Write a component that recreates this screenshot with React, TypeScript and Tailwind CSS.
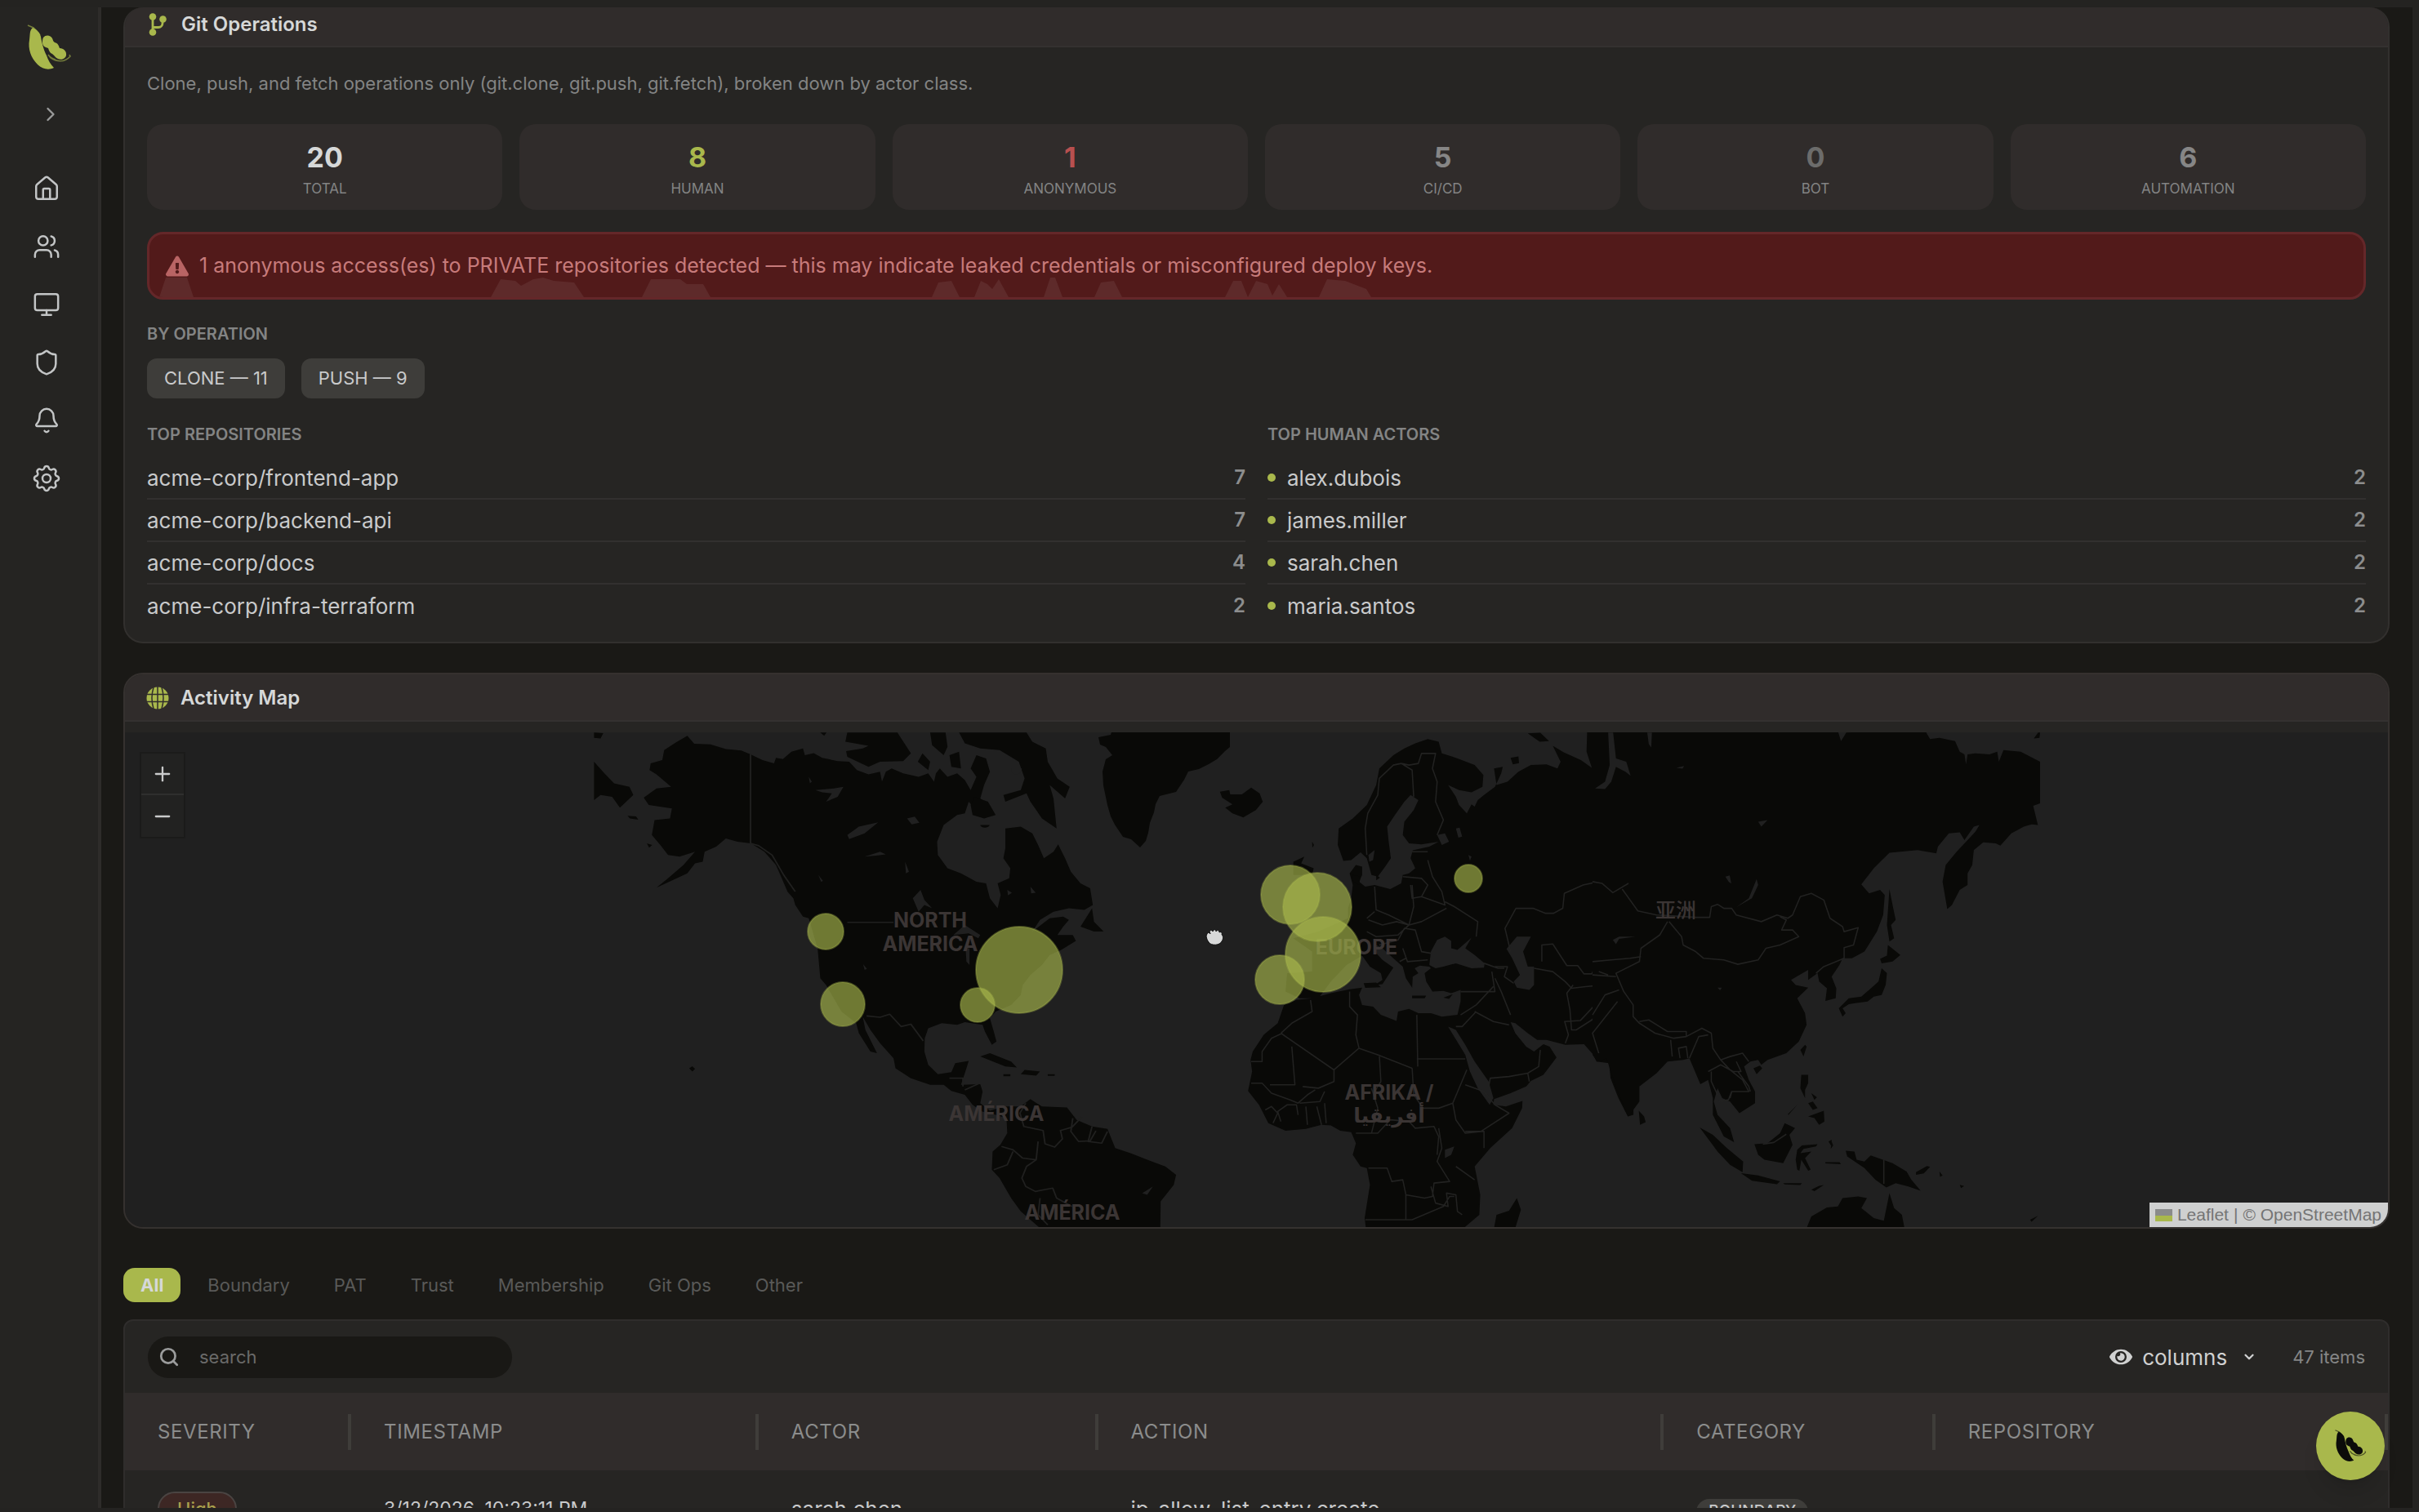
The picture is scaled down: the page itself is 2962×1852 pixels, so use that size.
import { useState } from 'react';
import type { ReactNode } from 'react';
import { Bell, ChevronDown, ChevronRight, House, Minus, Monitor, Plus, Shield, Users } from 'lucide-react';
import { FaExclamationTriangle, FaEye } from 'react-icons/fa';
import { TbSettings } from 'react-icons/tb';
import { FiSearch } from 'react-icons/fi';

const NAV = [
  { label: 'Home', icon: House },
  { label: 'Members', icon: Users },
  { label: 'Devices', icon: Monitor },
  { label: 'Security', icon: Shield },
  { label: 'Alerts', icon: Bell },
];

const STATS = [
  { label: 'TOTAL', value: 20, color: 'text-[#d6d8d8]' },
  { label: 'HUMAN', value: 8, color: 'text-[#a9b84c]' },
  { label: 'ANONYMOUS', value: 1, color: 'text-[#b8504f]' },
  { label: 'CI/CD', value: 5, color: 'text-[#868686]' },
  { label: 'BOT', value: 0, color: 'text-[#6c6c6b]' },
  { label: 'AUTOMATION', value: 6, color: 'text-[#868686]' },
];

const REPOS = [
  { name: 'acme-corp/frontend-app', count: 7 },
  { name: 'acme-corp/backend-api', count: 7 },
  { name: 'acme-corp/docs', count: 4 },
  { name: 'acme-corp/infra-terraform', count: 2 },
];

const ACTORS = [
  { name: 'alex.dubois', count: 2 },
  { name: 'james.miller', count: 2 },
  { name: 'sarah.chen', count: 2 },
  { name: 'maria.santos', count: 2 },
];

const TABS = ['All', 'Boundary', 'PAT', 'Trust', 'Membership', 'Git Ops', 'Other'];

const COLUMNS = [
  { label: 'SEVERITY', width: 'w-[10%]' },
  { label: 'TIMESTAMP', width: 'w-[18%]' },
  { label: 'ACTOR', width: 'w-[15%]' },
  { label: 'ACTION', width: 'w-[25%]' },
  { label: 'CATEGORY', width: 'w-[12%]' },
  { label: 'REPOSITORY', width: 'w-[20%]' },
];

// map markers, in map units
const MARKERS = [
  { x: 1011, y: 1141, r: 22 },
  { x: 1032, y: 1230, r: 27 },
  { x: 1248, y: 1188, r: 53 },
  { x: 1197, y: 1231, r: 21 },
  { x: 1580, y: 1096, r: 36 },
  { x: 1613, y: 1111, r: 42 },
  { x: 1620, y: 1169, r: 46 },
  { x: 1567, y: 1200, r: 30 },
  { x: 1798, y: 1076, r: 17 },
];

function PodLogo({ className }: { className: string }) {
  return (
    <svg viewBox="0 0 56 58" className={className} fill="currentColor" aria-hidden="true">
      <path d="M8 5c5 2 9 6 10 11 1 6 3 15 7 23 2 6 5 11 9 15-6 3-14 2-20-4C6 42 2 31 4 20 5 13 4 8 8 5z" />
      <path d="M21 17c3-4 9-3 11 1 1 2 1 4 3 5 4 1 5 4 6 7 5 0 9 4 8 9-1 4-6 6-10 4-3-1-4-4-7-6-3-1-4-4-5-7-4-1-7-3-7-7 0-2 0-4 1-6z" />
      <path d="M2 2l7 3 8 9M29 41c8 6 18 7 25-1l-1-2M27 38c2 3 5 5 9 6" fill="none" stroke="currentColor" strokeOpacity=".6" strokeWidth="1.6" />
    </svg>
  );
}

function BranchIcon({ className }: { className: string }) {
  return (
    <svg viewBox="0 0 22 28" className={className} fill="#a9b84c" aria-hidden="true">
      <circle cx="5" cy="4.500" r="4.300" />
      <circle cx="17.500" cy="7.500" r="4.300" />
      <circle cx="5" cy="23.500" r="4.300" />
      <path d="M5 5v18M5 17.500h7a5 5 0 0 0 5-5V8" fill="none" stroke="#a9b84c" strokeWidth="2.800" />
    </svg>
  );
}

function GlobeIcon({ className }: { className: string }) {
  return (
    <svg viewBox="0 0 28 28" className={className} aria-hidden="true">
      <circle cx="14" cy="14" r="13.500" fill="#a9b84c" />
      <path d="M1 9.500h26M1 18.500h26M14 0v28M9 1C6.500 9 6.500 19 9 27M19 1c2.500 8 2.500 18 0 26" fill="none" stroke="#302c2b" strokeWidth="1.500" />
    </svg>
  );
}

function WorldMap() {
  return (
    <svg viewBox="153 897 2771 606" preserveAspectRatio="xMidYMid slice" className="block h-full w-full" role="img" aria-label="Activity by location">
      <defs>
        <clipPath id="tiles"><rect x="727" y="897" width="1772" height="606" /></clipPath>
      </defs>
      <g clipPath="url(#tiles)" fill="#090907" strokeLinejoin="round">
        {/* Greenland */}
        <path d="M1363 890L1360 900 1345 903 1347 912 1354 915 1362 925 1354 930 1350 945 1351 962 1356 986 1360 1000 1365 1010 1375 1025 1385 1028 1396 1038 1403 1030 1406 1020 1408 1008 1413 995 1415 985 1420 975 1440 970 1450 955 1455 945 1468 942 1480 936 1490 930 1500 920 1506 915 1506 890z" />

        {/* the Americas */}
        <g transform="translate(700 880) scale(.472 .408)">
          <path d="M300 52L318 76 360 78 400 92 440 96 464 108 495 125 525 135 530 118 548 122 570 100 600 90 605 110 628 104 650 118 690 128 720 130 740 155 770 168 800 160 805 190 815 160 830 150 860 165 900 175 925 165 940 190 945 165 955 150 975 175 1000 165 1020 185 1035 215 1050 175 1035 150 1050 110 1075 120 1085 160 1070 200 1060 240 1080 260 1070 285 1045 270 1030 250 1020 285 1000 290 965 320 948 370 950 410 975 450 1010 465 1050 490 1075 495 1085 540 1105 570 1113 530 1105 495 1135 480 1138 450 1120 420 1125 390 1125 330 1165 325 1195 345 1210 380 1225 420 1250 400 1262 378 1280 420 1295 460 1320 495 1345 510 1352 560 1330 575 1290 570 1250 580 1215 605 1195 640 1240 600 1275 595 1290 605 1275 625 1260 650 1300 650 1308 668 1270 695 1240 710 1220 740 1190 770 1170 800 1165 830 1140 860 1100 880 1085 900 1095 940 1102 970 1090 980 1072 940 1066 920 1020 912 1000 920 960 915 925 930 916 960 915 1000 925 1040 950 1068 985 1062 995 1035 1030 1028 1020 1065 1010 1100 1060 1098 1066 1120 1060 1155 1085 1178 1120 1165 1165 1165 1190 1143 1220 1165 1285 1168 1310 1205 1350 1225 1390 1232 1410 1290 1450 1305 1500 1328 1540 1345 1568 1370 1562 1400 1528 1450 1527 1530 1215 1530 1165 1480 1140 1440 1110 1380 1090 1355 1092 1300 1112 1280 1130 1245 1128 1200 1100 1190 1065 1180 1040 1160 1020 1130 985 1118 965 1100 930 1100 880 1080 840 1050 835 1020 800 975 775 935 755 895 762 935 792 1005 775 1000 745 945 738 915 700 880 660 800 645 780 638 690 615 600 600 595 580 560 575 540 560 520 545 480 530 440 500 400 465 375 430 370 400 360 375 385 345 400 340 430 320 435 300 465 220 508 250 480 290 440 320 400 280 415 250 410 230 380 208 350 215 305 255 300 260 270 200 260 187 238 220 210 258 205 220 168 202 155 205 135 235 125 240 95 270 72z" />
          <path d="M58 130L85 165 110 195 150 205 160 230 125 268 105 235 75 230 58 245zM58 42L82 44 75 60 58 58z" />
          <path d="M715 42L845 42 880 105 860 128 800 130 770 145 715 115 712 98 755 90 770 82 710 70zM930 42L970 42 975 85 965 110 935 80zM1005 42L1180 42 1195 70 1230 90 1235 130 1260 180 1292 205 1280 240 1240 200 1250 240 1258 330 1220 300 1190 250 1180 225 1125 250 1120 230 1165 215 1175 180 1160 130 1110 95 1060 90 1020 75zM1045 235L1080 250 1100 290 1070 300 1040 290 1035 260zM910 105L930 130 925 155 898 130zM980 110L1005 100 1010 150 985 145zM1060 320a12 8 0 1 0 24 0zM1320 625L1350 570 1355 610 1380 640 1355 640zM1060 1015L1085 1005 1140 1030 1155 1048 1125 1045zM1175 1055L1215 1060 1205 1072 1165 1068zM1235 1068h18v5h-18zM1120 1068h18v6h-18zM305 1050l8-6 7 8-7 8zM145 292l22 2 6 10-22-4zM195 375l14 5-8 8z" />
          <path d="M645 42h16l-6 10z" />
          {/* inland water */}
          <path fill="#202020" d="M632 215L680 210 705 205 690 235 660 250 675 225 650 222zM715 350L745 325 795 312 760 345 720 362zM760 415L800 400 815 408 790 412zM885 540L905 515 915 545 935 570 915 560 900 580zM865 430l10 30-8 5zM1140 150a14 18 0 1 0 28 0zM990 650L1020 620 1060 650 1055 660 1030 645zM1022 690l10 0 0 50-8-10zM756 738l10 14-6 3zM870 300l20-5 12 18-20 5zM640 470l12 18-5 2zM615 175l8 15-5 4zM1130 515l12 8-10 8zM1190 505l14 18-12 2zM1480 1425l28-20-15 25z" />
          <g fill="none" stroke="#20201f" strokeWidth="4">
            <path d="M464 108V375L485 382 520 410 550 470 580 520M715 612H835M765 893L800 897 825 888 855 925 880 918 912 968" />
            <path d="M980 1080h35v25M1020 1115l35-18M1178 1155l-15 30 10 40 50 12 5 40 25 10 20-25-5-25 30-10 25-30M1300 1200l-5 40 20 30 30-2 15-30M1350 1225l-10 45 35 5 15-35M1115 1285l30 10 25 25 35 5 5-55M1145 1300l-15 40-35 15M1205 1325l-25 20-12 35 10 25 25 15 45-10 10 30 40 25M1215 1440l-5 50 25 30" />
          </g>
        </g>

        {/* Europe, Africa and the Middle East */}
        <g transform="translate(1400 880) scale(.3827 .408)">
          <path d="M1568 38L1420 38 1418 100 1435 148 1400 125 1345 102 1310 82 1335 130 1325 150 1290 138 1240 140 1200 160 1165 190 1130 200 1122 150 1150 145 1145 165 1125 205 1090 230 1070 245 1060 265 1050 258 1035 285 1010 260 1000 235 975 200 1010 215 1050 222 1085 205 1088 170 1060 140 1000 118 955 105 945 70 910 62 870 75 835 90 800 110 755 150 745 200 715 260 670 300 625 330 622 380 640 428 665 425 695 402 715 420 730 470 750 475 770 450 792 420 785 370 780 325 805 290 835 250 855 230 880 245 865 275 835 310 830 350 850 375 890 378 945 370 915 385 862 396 855 420 870 450 850 465 830 470 825 495 790 512 740 500 710 505 690 490 700 470 700 445 680 440 660 465 670 500 665 540 655 570 655 600 560 640 480 660 540 700 540 760 460 765 455 820 500 840 560 840 600 790 650 740 700 712 725 745 760 765 765 785 740 800 765 798 788 765 800 748 765 725 740 700 745 680 765 690 800 720 830 745 840 780 860 808 862 775 880 765 868 750 885 742 915 745 920 750 900 765 905 790 925 820 960 818 985 825 1015 815 1015 850 1005 890 955 895 920 885 880 885 850 872 815 880 810 908 760 890 735 865 700 860 690 830 700 808 660 813 600 825 540 840 490 845 450 860 430 915 385 950 350 1000 343 1025 348 1060 335 1118 370 1160 400 1215 455 1238 520 1232 570 1220 600 1222 630 1238 665 1242 680 1275 670 1310 695 1345 715 1350 725 1400 708 1500 712 1530 1025 1530 1075 1490 1078 1430 1060 1345 1110 1290 1180 1230 1212 1170 1213 1148 1160 1165 1120 1160 1122 1143 1175 1125 1225 1105 1240 1088 1280 1070 1322 1018 1300 985 1280 978 1270 985 1250 1000 1225 985 1190 945 1175 912 1190 915 1230 945 1260 965 1290 965 1350 980 1410 978 1440 1010 1450 1030 1490 1035 1495 1080 1520 1140 1550 1195 1568 1190z" />
          <path d="M245 220L275 215 278 228 315 228 345 208 372 225 382 250 360 275 320 297 285 285 262 268 285 258 252 238zM480 430L515 415 505 435 545 450 540 470 480 470zM1195 1440L1208 1475 1190 1530 1122 1530 1130 1490 1170 1478zM860 832h45l-5 8h-40zM960 838l30-10-12 14zM705 795l40-2 15 14-50 2zM1230 45l40-2 28 25-30 2zM1175 118l25-4 2 20-20 4zM540 370l6 10-5 8zM745 470l12 8-12 8zM670 470l25 5-5 25-18-10z" />
          <path fill="#202020" d="M915 740L920 700 940 665 965 655 985 668 985 690 1005 695 1050 658 1030 690 1060 710 1092 735 1090 748 1050 750 1000 735 960 745 935 750zM1162 692L1195 655 1240 655 1215 700 1230 745 1250 745 1250 800 1235 815 1195 808 1185 790 1205 770 1180 720zM975 925L1000 935 1030 980 1060 1030 1105 1090 1120 1140 1108 1160 1070 1110 1045 1060 1030 1010zM1490 42L1508 42 1510 120 1545 130 1568 170 1540 150 1510 150 1490 210 1450 212 1485 180 1495 120zM940 350L965 345 978 370 955 380zM1000 330L1012 328 1020 355 1008 358zM1500 660L1568 650 1568 660 1515 668 1510 680zM965 1295L995 1285 985 1310 965 1320zM1040 410l10 5-5 12zM720 410l20-15-5 30-12 5zM1505 650l-5 20 12 12z" />
          <g fill="none" stroke="#222221" strokeWidth="4">
            <path d="M715 410L710 330 718 285 750 230 755 180 800 140 825 135 860 155 865 235M825 135L850 140 880 135 890 105 935 105 925 150 940 190 935 250 960 305 940 350M860 400h50M830 475l60 5 20 20-20 35-30 5-5-40M740 505l5 70 40 15 65 30 15-55-5-65M890 535l75 25-10-40-30-45-15-50M965 550l30 15 75 45-5 45M850 620l40-10 80-40M715 600l25-20M720 605l45 15 45-10 40 10-35 30-70 5-30-15M755 680l60-15 20-35 35 5 20 65 30 5M830 690l15 40 65-5M820 730l20-10M1090 735l45 15 20 0M1115 760l10 60-110 0M1125 745l40 0-10 30 30 20M1125 780l20 40 30 70M1015 890l50-30 55-55M1060 880l60 30 50 10M1000 925l20 0 45-45M1105 1105l5-25 60-5 60-10 5 25M1230 1065l35-20 5-50" />
            <path d="M1175 700l-18-70 35-60 55 0 40 15 25 0 30-15 5-45 60-25 50-10 50 30 60-15 8 25M1275 730v-50l35-3 45 65 35 0 20 25 25 0 10-20 50 0 40 10M1250 750l60 10 40 30 20 20 45-5 60-5 0 45-20 40-20 20-50 30-15 0-5-60-10-50 20-25M1350 975l10-25-12-40 50-3 60-60M1450 1005l5-50 60-65 10-40 40-15" />
            <path d="M440 945L475 915 540 880 535 845M660 820l0 45 25 25-5 60 10 40 60 20 110 40M875 890L878 1045M875 1022H1030M690 990L610 1055 440 945M610 1055L610 1090 560 1110 510 1105M345 1030h35v-30l30-40 35-15M405 1100L485 1100 475 985M345 1095l35 0 30 30 60 20 25 10 30-25 25-15M755 1010l5 80-20 30M860 1050l5 80 30 40 50 0 45-15 45-100M990 1155l10 50 30 40 50-5 90-55-45-25-35-40-60-20M680 1245l70 0 40-40 60 5 20 20 60-5 15 30-5 55M720 1350l60 0 15 40 35-5 10 45 60 10 25-5 5-40 50-5-40-60 15-40-10-60M1000 1345l60 40M840 1430l0 75M710 1505h150l100-40 20-30 15 0M920 1405l15 50 40 10-5-40 30 5 5 50 15 10M1030 1240l60 0 0 50M520 1165l5 55M555 1165l15 55M580 1155l5 60M500 1155l65-5 15-30M390 1175l20-10 20 20-15 30M440 1210l-10-30 30-20 30 0 5 30M730 1110l20 60-20 75" />
          </g>
        </g>

        {/* Asia and Oceania */}
        <g transform="translate(1950 880) scale(.3827 .408)">
          <path d="M0 38L785 38 795 68 812 42 1065 38 1080 62 1110 58 1160 68 1175 100 1190 108 1195 138 1200 108 1225 105 1270 108 1295 100 1300 130 1315 95 1370 100 1432 130 1432 255 1410 262 1425 320 1405 318 1380 325 1340 345 1305 382 1290 375 1250 372 1220 395 1215 440 1200 465 1200 500 1175 515 1150 560 1135 572 1120 490 1130 440 1165 400 1200 365 1225 340 1238 320 1220 325 1190 365 1175 342 1140 345 1105 385 1100 405 1040 395 950 403 900 450 860 498 885 525 920 515 935 530 930 590 910 640 870 700 830 720 800 720 790 740 765 775 780 810 778 840 745 848 750 810 725 790 720 765 690 785 690 755 635 785 650 800 690 808 655 840 680 885 685 920 660 970 620 1005 560 1025 540 1040 530 1025 505 1030 485 1045 500 1085 520 1120 520 1155 470 1185 440 1150 415 1140 400 1110 388 1150 400 1190 440 1230 453 1272 420 1255 385 1190 385 1140 370 1085 345 1098 328 1060 310 1020 290 1025 240 1030 205 1065 150 1105 150 1150 115 1195 85 1130 55 1050 45 1020 15 1030 0 1010z" />
          <path d="M1412 60l14-18 6 0-2 16zM148 1178L165 1195 170 1212 152 1220zM343 1228L385 1250 430 1290 482 1330 480 1362 440 1340 400 1300zM475 1365L530 1372 600 1390 590 1398 510 1388zM518 1278L560 1275 600 1245 615 1215 648 1230 630 1250 640 1280 610 1335 550 1325 530 1310zM655 1295L670 1282 720 1278 715 1285 675 1292 665 1305 700 1300 680 1320 698 1355 690 1358 668 1325 662 1358 655 1355 650 1325zM810 1298L838 1300 845 1325 870 1330 890 1312 960 1335 1005 1360 1020 1385 1050 1418 1010 1405 970 1395 940 1408 905 1385 870 1350 815 1315zM685 1530L700 1495 750 1468 785 1465 800 1440 850 1435 878 1440 860 1470 900 1500 932 1508 950 1425 965 1470 990 1490 998 1530zM668 1070L690 1070 690 1095 680 1115 680 1140 665 1110zM690 1195L740 1178 742 1210 725 1220 710 1200zM665 995l15-15 5 5-10 30zM515 1050l20-8 8 8-18 18zM950 512L960 560 970 605 955 620 965 660 950 670 942 620zM945 680L985 710 960 730 925 735 920 722 942 712zM925 750L942 765 938 800 925 830 900 835 880 850 840 855 820 858 800 870 810 885 800 895 788 870 820 840 860 835 885 815 915 790zM1035 1362l35-18 10 2-20 20-25 4zM755 1270l10-5 0 20zM745 1332l45 0 5 6-50-2zM610 1395l60 0-5 6-50-2zM700 1415l25-12 15-2-30 18zM765 1270l5 12-8 10zM690 1155l15-5 15 20-15 5zM700 1125l18 12-8 8zM625 1188l30-28-28 30zM1400 1505l25-12-20 18zM1110 1360l10 12-8 4zM1175 1400l14 4-10 6z" />
          <path fill="#202020" d="M50 42L66 42 75 120 108 130 122 172 105 160 75 145 60 190 40 212 8 210 40 190 55 140zM175 42l15 0-2 45-8-10zM525 482L530 500 510 540 460 567 500 540zM65 665L85 655 138 655 85 662 75 678zM268 148l25-5-5 8zM530 310l30-5-20 20zM400 808l14 0-6 8zM425 475l14-4 5 25-8-5z" />
          <g fill="none" stroke="#222221" strokeWidth="4">
            <path d="M0 490l30 5 35 28 50-28M95 512L145 578 205 590 330 597 375 597 380 565 400 558 420 570 445 570 460 590 540 610 590 590 625 600 640 590 665 535 700 525 740 545 760 600 800 625 805 640 850 628 835 680 805 688 805 720 740 745 715 765" />
            <path d="M240 610L215 650 155 690 150 730 75 765 100 820 130 860 130 895 150 915 200 945 260 960 300 955 350 930 380 945 385 990 410 1025 440 1015 480 1005 500 1030M245 610L285 655 290 680 330 700 355 720 420 725 465 738 530 725 555 690 600 680 660 655 640 635 605 635 620 605 600 595M0 770l75 5M0 730l60-5 60-5 35-5M20 760l30 10M80 850L0 945 20 1005M0 890l40-60 45-15M150 910l30-5 60 35 60 0 0 15M250 965l5 50M280 1020l-5-30 25-5 5 35M310 1020l30-65 30-5M370 1060l40-20 40 20 25 0-15-30M410 1025l30 30 40 30 20 35-55 0-10 25-30 5M380 1060l0 30 20 40M440 1140l5-18M465 1060l35 45 5 15M545 1278l35-5 40-25M932 1325v72" />
          </g>
        </g>
      </g>

      <g fontFamily="Inter, 'Open Sans', sans-serif" fontWeight="700" fontSize="25" fill="#3b3534" textAnchor="middle">
        <text x="1139" y="1136">NORTH</text>
        <text x="1139" y="1165">AMERICA</text>
        <text x="1220" y="1373">AMÉRICA</text>
        <text x="1313" y="1494">AMÉRICA</text>
        <text x="1661" y="1169">EUROPE</text>
        <text x="1701" y="1347">AFRIKA /</text>
        <text x="1701" y="1375" fontFamily="'DejaVu Sans', sans-serif">أفريقيا</text>
        <text x="2052" y="1124" fontWeight="500" fontFamily="'Noto Sans CJK SC', sans-serif">亚洲</text>
      </g>

      {MARKERS.map(m => (
        <circle key={`${m.x}-${m.y}`} cx={m.x} cy={m.y} r={m.r} fill="#a9b84c" fillOpacity="0.64" stroke="#a9b84c" strokeOpacity="0.35" strokeWidth="2" />
      ))}

      {/* grab cursor */}
      <path d="M1478 1144c1-2 3-2 4 0l-1-3c1-2 3-2 4 0 1-3 4-3 4 0 1-2 4-2 4 1 2-1 4 0 3 3 2 1 2 6 0 8-2 5-13 6-16 1-2-3-4-7-2-10z" fill="#d8d9d9" stroke="#0c0c0c" strokeWidth="1" />
    </svg>
  );
}

function SectionLabel({ children }: { children: ReactNode }) {
  return <h3 className="text-[20px] leading-6 font-semibold text-[#838484]">{children}</h3>;
}

function RankList({ rows, dot }: { rows: { name: string; count: number }[]; dot?: boolean }) {
  return (
    <ul className="mt-4 divide-y-2 divide-[#32302f]">
      {rows.map(r => (
        <li key={r.name} className="flex h-[52px] items-center text-[26px]">
          {dot && <span className="mr-[14px] h-[10px] w-[10px] rounded-full bg-[#a9b84c]" />}
          <span className="text-[#c9cacb]">{r.name}</span>
          <span className="ml-auto text-[24px] font-semibold text-[#8c8d8d]">{r.count}</span>
        </li>
      ))}
    </ul>
  );
}

export default function App() {
  const [tab, setTab] = useState('All');
  const [query, setQuery] = useState('');

  return (
    <div className="flex h-screen overflow-hidden bg-[#242321] pt-[9px] pr-2 pb-[5px] font-['Inter','Open_Sans',sans-serif] text-[#c9cacb]">
      <aside className="flex w-[124px] shrink-0 flex-col items-start border-r-4 border-[#2e2c2a] bg-[#252422]">
        <a href="#" aria-label="Dashboard" className="mt-[19px] ml-8 text-[#a9b84c]">
          <PodLogo className="h-[60px] w-14" />
        </a>
        <button aria-label="Expand sidebar" className="mt-[38px] ml-12 text-[#9a9b9b]">
          <ChevronRight size={28} strokeWidth={2} />
        </button>
        <nav className="mt-[60px] ml-10 flex flex-col gap-[37px] text-[#c3c5c6]">
          {NAV.map(({ label, icon: Icon }) => (
            <a key={label} href="#" aria-label={label}>
              <Icon size={34} strokeWidth={1.75} />
            </a>
          ))}
          <a href="#" aria-label="Settings" className="-m-[3px]">
            <TbSettings size={40} strokeWidth={1.5} />
          </a>
        </nav>
      </aside>

      <main className="flex min-w-0 flex-1 flex-col overflow-hidden bg-[#1a1916] pr-7 pl-[27px]">
        <section className="shrink-0 overflow-hidden rounded-[24px] border-x-2 border-b-2 border-[#32302e] bg-[#262523]">
          <header className="flex h-[49px] items-center gap-[18px] border-b-2 border-[#343130] bg-[#302c2b] pr-[26px] pb-[6px] pl-[29px]">
            <BranchIcon className="h-7 w-[22px]" />
            <h2 className="text-[24px] font-semibold text-[#d6d8d8]">Git Operations</h2>
          </header>
          <div className="px-[27px] pt-[29px] pb-[18px]">
            <p className="text-[22px] leading-[30px] text-[#838484]">
              Clone, push, and fetch operations only (git.clone, git.push, git.fetch), broken down by actor class.
            </p>
            <div className="mt-[35px] grid grid-cols-6 gap-[21px]">
              {STATS.map(s => (
                <div key={s.label} className="flex h-[105px] flex-col items-center justify-center rounded-[20px] bg-[#302c2b] pt-2">
                  <span className={`text-[34px] leading-[44px] font-bold ${s.color}`}>{s.value}</span>
                  <span className="text-[17px] leading-8 text-[#838484]">{s.label}</span>
                </div>
              ))}
            </div>

            <div role="alert" className="relative mt-[27px] flex h-[83px] items-center gap-[13px] overflow-hidden rounded-[20px] border-[3px] border-[#642729] bg-[#521a1a] px-5 text-[#c77b7b]">
              <svg viewBox="0 0 1520 24" className="absolute bottom-0 left-0 h-6 w-[1520px]" fill="#5e2a2a" aria-hidden="true">
                <path d="M12 24L20 0H46L54 24zM418 24L430 2 448 4 455 10 470 2 482 0 495 4 520 6 532 24zM603 24L614 2 650 2 658 8 678 8 687 24zM958 24l8-18 16-2 10 20zM1010 24l8-20 8 4 6 6 8-12 12 22zM1095 24l8-24 6 0 9 24zM1157 24l8-18 16-2 10 20zM1317 24l10-20 10 0 8 20 10-20 14 4 6 14 8-14 10 16zM1432 24l10-22 22 2 26 10 6 10z" />
              </svg>
              <FaExclamationTriangle size={28} className="relative text-[#b96464]" />
              <span className="relative text-[25px]">
                1 anonymous access(es) to PRIVATE repositories detected — this may indicate leaked credentials or misconfigured deploy keys.
              </span>
            </div>

            <div className="mt-[30px]">
              <SectionLabel>BY OPERATION</SectionLabel>
              <div className="mt-[18px] flex gap-5 text-[22px]">
                <span className="flex h-[49px] items-center rounded-xl bg-[#3e3d3a] px-[21px]">CLONE — 11</span>
                <span className="flex h-[49px] items-center rounded-xl bg-[#3e3d3a] px-[21px]">PUSH — 9</span>
              </div>
            </div>

            <div className="mt-8 grid grid-cols-2 gap-[27px]">
              <div>
                <SectionLabel>TOP REPOSITORIES</SectionLabel>
                <RankList rows={REPOS} />
              </div>
              <div>
                <SectionLabel>TOP HUMAN ACTORS</SectionLabel>
                <RankList rows={ACTORS} dot />
              </div>
            </div>
          </div>
        </section>

        <section className="mt-9 shrink-0 overflow-hidden rounded-[24px] border-2 border-[#35312f] bg-[#262523]">
          <header className="flex h-[58px] items-center gap-[14px] border-b-2 border-[#343130] bg-[#302c2b] px-[26px] pt-[2px]">
            <GlobeIcon className="h-7 w-7" />
            <h2 className="text-[24px] font-semibold text-[#d6d8d8]">Activity Map</h2>
          </header>
          <div className="relative mt-[13px] h-[606px] bg-[#202020]">
            <WorldMap />
            <div className="absolute top-6 left-[18px] flex flex-col divide-y-2 divide-[#2f2f2e] border-2 border-[#1b1b1a] bg-[#222221]">
              <button aria-label="Zoom in" className="flex h-[51px] w-[52px] items-center justify-center"><Plus size={28} /></button>
              <button aria-label="Zoom out" className="flex h-[51px] w-[52px] items-center justify-center"><Minus size={28} /></button>
            </div>
            <div className="absolute right-0 bottom-0 flex h-[30px] items-center bg-[#cfd0d0] pr-2 pl-[7px] font-['Liberation_Sans',sans-serif] text-[21px] text-[#747474]">
              <svg viewBox="0 0 21 15" className="mr-[6px] h-[15px] w-[21px]" aria-hidden="true">
                <path fill="#8a8b8b" d="M0 0h21v8H0z" />
                <path fill="#a9b84c" d="M0 8h21v7H0z" />
              </svg>
              <a href="#">Leaflet</a>
              <span className="px-[6px]">|</span>
              <span>© <a href="#">OpenStreetMap</a></span>
            </div>
          </div>
        </section>

        <div role="tablist" className="mt-12 flex shrink-0 gap-3 text-[22px]">
          {TABS.map(t => (
            <button key={t} role="tab" aria-selected={tab === t} onClick={() => setTab(t)}
              className={`h-[42px] rounded-[14px] px-[21px] ${tab === t ? 'bg-[#a9b84c] font-bold text-[#d6d8d8]' : 'text-[#595958]'}`}>
              {t}
            </button>
          ))}
        </div>

        <section className="mt-[21px] shrink-0 rounded-t-[12px] border-2 border-[#2f2d2c] bg-[#262523]">
          <div className="flex h-[88px] items-center px-7">
            <label className="flex h-[51px] w-[446px] items-center gap-6 rounded-full bg-[#191815] px-[13px]">
              <FiSearch size={26} strokeWidth={2.5} className="text-[#9b9c9c]" aria-hidden="true" />
              <input type="text" aria-label="Search events" placeholder="search" value={query} onChange={e => setQuery(e.target.value)}
                className="min-w-0 flex-1 bg-transparent text-[22px] outline-none placeholder:text-[#6a6a69]" />
            </label>
            <button className="ml-auto flex items-center text-[26px] text-[#d0d1d1]">
              <FaEye size={28} className="mr-3" />
              columns
              <ChevronDown size={18} strokeWidth={3} className="ml-[18px]" />
            </button>
            <span className="ml-[44px] text-[22px] text-[#858686]">47 items</span>
          </div>
          <table className="w-full table-fixed text-left text-[26px]">
            <thead className="bg-[#302c2b] text-[24px] text-[#8b8c8c]">
              <tr>
                {COLUMNS.map(c => (
                  <th key={c.label} scope="col" className={`h-[95px] p-0 font-normal ${c.width}`}>
                    <div className="flex h-11 items-center border-r-4 border-[#3f3d3a] pl-10 tracking-wide">{c.label}</div>
                  </th>
                ))}
              </tr>
            </thead>
            <tbody>
              <tr className="h-[94px]">
                <td className="pl-10">
                  <span className="inline-flex h-[42px] items-center rounded-full border-2 border-[#4a4442] bg-[#3d2724] px-[22px] text-[22px] font-medium text-[#a9a04c]">High</span>
                </td>
                <td className="pl-10 text-[23px]">3/12/2026, 10:23:11 PM</td>
                <td className="pl-10">sarah.chen</td>
                <td className="pl-10">ip_allow_list_entry.create</td>
                <td className="pl-10">
                  <span className="inline-flex h-8 items-center rounded-full bg-[#3e3d3a] px-[15px] text-[19px] font-medium">BOUNDARY</span>
                </td>
                <td className="pl-10">-</td>
              </tr>
            </tbody>
          </table>
        </section>
      </main>

      <button aria-label="Open assistant" className="fixed right-[42px] bottom-[39px] flex h-[84px] w-[84px] items-center justify-center rounded-full bg-[#a9b84c] text-[#0c0c0a] shadow-xl">
        <PodLogo className="h-[42px] w-10" />
      </button>
    </div>
  );
}
